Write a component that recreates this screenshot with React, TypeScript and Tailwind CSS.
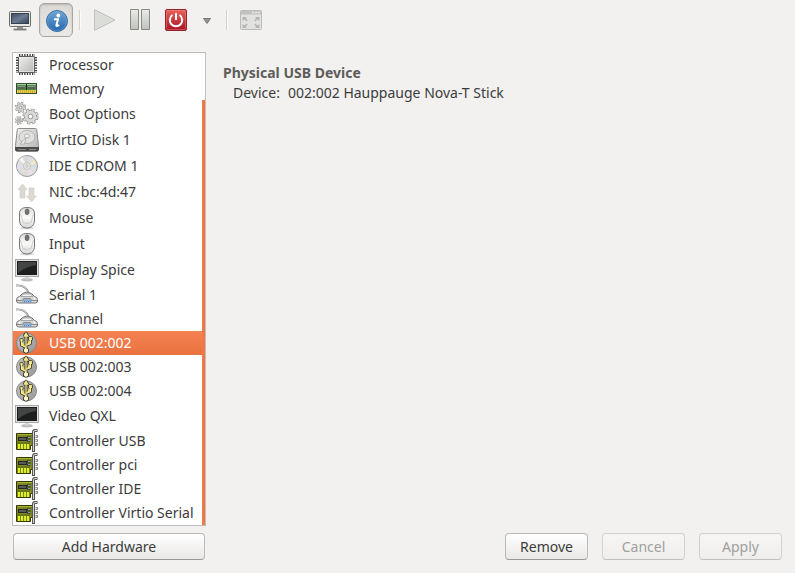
import { useState } from "react";
import type { ReactNode } from "react";

function ProcessorIcon() {
  return (
    <>
      <path d="M4 2.5h16M4 20.5h16" stroke="#3b3b3b" strokeWidth="3" strokeDasharray="1.3 1.3" />
      <path d="M2.5 4v16M20.5 4v16" stroke="#3b3b3b" strokeWidth="3" strokeDasharray="1.3 1.3" />
      <rect x="3.5" y="3.5" width="16" height="16" rx="1" fill="url(#silver)" stroke="#5c5c5a" />
      <rect x="4.500" y="4.500" width="14" height="14" fill="none" stroke="#f4f4f2" strokeOpacity=".6" />
    </>
  );
}

function MemoryIcon() {
  return (
    <>
      <rect x="1.5" y="6.5" width="20" height="10" fill="#4c8b43" stroke="#35502e" />
      <path d="M2 7.500h19" stroke="#a9cfa0" />
      <path d="M3 9h7v3H3zM13 9h7v3h-7z" fill="#59615a" />
      <path d="M3 9.500h7M13 9.500h7" stroke="#8f988f" />
      <rect x="11" y="7" width="1" height="6" fill="#17310f" />
      <path d="M2 14.500h19" stroke="#f0d34a" strokeWidth="3" />
      <path d="M3.500 14.500h18" stroke="#a58a24" strokeWidth="3" strokeDasharray=".6 1.400" />
    </>
  );
}

function Gear({ x, y, r }: { x: number; y: number; r: number }) {
  const tooth = (2 * Math.PI * r) / 16;
  return (
    <g transform={`translate(${x} ${y})`}>
      <circle r={r} fill="none" stroke="#8d8d8b" strokeWidth="3.200" strokeDasharray={`${tooth * 1.2} ${tooth * 0.8}`} />
      <circle r={r - 0.3} fill="#d8d8d6" stroke="#8d8d8b" strokeWidth=".9" />
      <circle r={r} fill="none" stroke="#dcdcda" strokeWidth="2" strokeDasharray={`${tooth * 0.8} ${tooth * 1.2}`} strokeDashoffset={-tooth * 0.2} />
      <circle r={r * 0.35} fill="#fff" stroke="#8d8d8b" strokeWidth=".9" />
    </g>
  );
}

function BootIcon() {
  return (
    <>
      <Gear x={5.5} y={5.5} r={4} />
      <Gear x={4} y={18.5} r={2.600} />
      <Gear x={15.500} y={14.500} r={6.500} />
    </>
  );
}

function DiskIcon() {
  return (
    <>
      <path d="M3.500 .5h17q1 0 1.200 1l1.800 16v4q0 1.500-1.500 1.500H2q-1.500 0-1.500-1.500v-4l1.800-16q.2-1 1.200-1z" fill="url(#silver)" stroke="#8a8a88" />
      <path d="M.5 19.500h23v2q0 1.500-1.500 1.500H2q-1.500 0-1.500-1.500z" fill="#4d4d4b" stroke="#4a4a48" />
      <path d="M3 21.500h8M14 21.500h7" stroke="#8b8b89" />
      <ellipse cx="12" cy="9" rx="8" ry="6.500" fill="#e0e0de" stroke="#b4b4b2" />
      <ellipse cx="12" cy="8" rx="2.500" ry="2" fill="#f1f1ef" stroke="#b4b4b2" />
      <path d="M11 9.500l-6 6.500h4.500z" fill="#eeeeec" stroke="#a9a9a7" strokeWidth=".8" />
    </>
  );
}

function DiscIcon() {
  return (
    <>
      <circle cx="12" cy="12" r="10.500" fill="#dededc" stroke="#9b9b99" />
      <path d="M12 12 4 6l3-3z" fill="#f5f5ee" />
      <path d="M12 12 8 2h5z" fill="#cfd8df" />
      <path d="M12 12 19 6l2 4z" fill="#f5e8bd" />
      <path d="M12 12l9-2v4z" fill="#cbdff0" />
      <path d="M12 12 2 11v4z" fill="#dfe1f2" />
      <path d="M12 12l1 10 5-3z" fill="#eadfe6" />
      <circle cx="12" cy="12" r="3.500" fill="#ececea" stroke="#b7b7b5" strokeWidth=".8" />
      <circle cx="12" cy="12" r="1.300" fill="#fff" stroke="#a2a2a0" strokeWidth=".7" />
    </>
  );
}

function NetworkIcon() {
  return (
    <g fill="#dcd8d2" stroke="#d0ccc5" strokeWidth=".6">
      <path d="M7.500 4 12 9.500H10v8.500H5V9.500H3z" />
      <path d="M14 8h5v8h2.500l-5 5.700-5-5.700H14z" />
    </g>
  );
}

function MouseIcon() {
  return (
    <>
      <ellipse cx="12" cy="22" rx="7" ry="1.500" fill="#000" opacity=".15" />
      <path d="M12 1.500c5 0 7.500 2 7.500 6.500v6c0 5-3 8-7.500 8s-7.500-3-7.500-8V8c0-4.500 2.500-6.500 7.500-6.500z" fill="url(#mouse)" stroke="#737371" />
      <path d="M5 8c2 2 1.500 5 3 8.500M19 8c-2 2-1.500 5-3 8.500M8 16.500q4 2 8 0" fill="none" stroke="#c2c2c0" strokeWidth=".8" />
      <rect x="10.300" y="3" width="3.600" height="5.600" rx="1.800" fill="#71716f" stroke="#5c5c5a" strokeWidth=".8" />
    </>
  );
}

function ScreenIcon() {
  return (
    <>
      <ellipse cx="12" cy="21.800" rx="5.500" ry="1.200" fill="#c9c9c7" stroke="#a3a3a1" strokeWidth=".6" />
      <path d="M10 18h4v3h-4z" fill="#d6d6d4" />
      <rect x=".5" y="1.500" width="23" height="17" fill="#e2e2e0" stroke="#a7a7a5" />
      <rect x="2" y="3" width="20" height="14" fill="#1d1f1f" />
      <path d="M3 4h18v3Q12 8 3 15z" fill="#434545" />
    </>
  );
}

function SerialIcon() {
  return (
    <>
      <path d="M1 2.500q9-1 12.500 7" fill="none" stroke="#8b8b89" strokeWidth="1.800" />
      <path d="M1 2.500q9-1 12.500 7" fill="none" stroke="#e4e4e2" strokeWidth=".7" />
      <path d="M7.500 10.500q4.500-3 9 0l3 3q3 .5 3 3v1.500q0 2-2 2H4q-2.500 0-2.500-2v-1.500q0-2.500 3-3z" fill="#d6d6d4" stroke="#747472" />
      <path d="M8.500 11h7l2.500 2.500H6z" fill="#f7f7f5" stroke="#8a8a88" strokeWidth=".7" />
      <path d="M2 17.500h5.500l1-2h7l1 2H22" fill="none" stroke="#7b7b79" strokeWidth=".8" />
      <path d="M8.300 16.500h7.800l.8 3H7.500z" fill="#5c86bd" />
      <path d="M8.500 17.500h8M8 18.800h9" stroke="#dbe8f5" strokeWidth=".8" strokeDasharray="1 1" />
      <circle cx="4.500" cy="15.500" r="1" fill="#fff" />
      <circle cx="19.500" cy="15.500" r="1" fill="#fff" />
    </>
  );
}

function UsbShape() {
  return (
    <>
      <path d="M11 5v14M11 16.500 6.500 14V9.500M11 14.500l4.500-2V8" />
      <path d="M11 2.300 12.700 5H9.300zM14.700 6.700h1.600v1.600h-1.600zM6 8.500h1v1H6z" />
      <circle cx="11" cy="19.500" r="1.500" />
    </>
  );
}

function UsbIcon() {
  return (
    <>
      <circle cx="11.500" cy="12" r="10" fill="url(#usb)" stroke="#868684" />
      <g fill="none" stroke="#34342c" strokeWidth="3" strokeLinejoin="round"><UsbShape /></g>
      <g fill="#f5e26a" stroke="#f5e68a" strokeWidth="1.300"><UsbShape /></g>
      <circle cx="11" cy="19.500" r="1.900" fill="#fff9cf" />
    </>
  );
}

function CardIcon() {
  return (
    <>
      <path d="M1.500 4.500h17v12h-3v4h-14z" fill="#7f881a" stroke="#343800" />
      <path d="M2.500 5.500h15" stroke="#a5af3a" />
      <rect x="3.500" y="8.500" width="8" height="3" fill="#555a5d" stroke="#25282a" />
      <path d="M12 8.500h3.500M12 11.500h3.500" stroke="#25282a" strokeWidth="2" />
      <path d="M13 8.500h2.500M13 11.500h2.500" stroke="#7aa2d0" />
      <path d="M2 14h13" stroke="#5d6510" />
      <path d="M4 15v5M7 15v5M10 15v5M13 15v5" stroke="#e6fa2c" strokeWidth="1.800" />
      <path d="M18.500 23V3q0-1.500 1.500-1.500h2.500" fill="none" stroke="#555753" strokeWidth="3" />
      <path d="M18.500 22V3q0-1.500 1.500-1.500h2" fill="none" stroke="#d3d7cf" />
      <path d="M20.500 6.500h2v2h-2M20.500 10.500h2v2h-2M20.500 14.500h2v2h-2" fill="#d3d7cf" stroke="#6c6e6a" strokeWidth=".8" />
    </>
  );
}

type Device = { name: string; icon: () => ReactNode; tall?: boolean };

const devices: Device[] = [
  { name: "Processor", icon: ProcessorIcon },
  { name: "Memory", icon: MemoryIcon },
  { name: "Boot Options", icon: BootIcon, tall: true },
  { name: "VirtIO Disk 1", icon: DiskIcon, tall: true },
  { name: "IDE CDROM 1", icon: DiscIcon, tall: true },
  { name: "NIC :bc:4d:47", icon: NetworkIcon, tall: true },
  { name: "Mouse", icon: MouseIcon, tall: true },
  { name: "Input", icon: MouseIcon, tall: true },
  { name: "Display Spice", icon: ScreenIcon, tall: true },
  { name: "Serial 1", icon: SerialIcon },
  { name: "Channel", icon: SerialIcon },
  { name: "USB 002:002", icon: UsbIcon },
  { name: "USB 002:003", icon: UsbIcon },
  { name: "USB 002:004", icon: UsbIcon },
  { name: "Video QXL", icon: ScreenIcon, tall: true },
  { name: "Controller USB", icon: CardIcon },
  { name: "Controller pci", icon: CardIcon },
  { name: "Controller IDE", icon: CardIcon },
  { name: "Controller Virtio Serial", icon: CardIcon },
];

function Gradients() {
  return (
    <svg className="absolute h-0 w-0" aria-hidden="true">
      <defs>
        <linearGradient id="silver" x1="0" y1="0" x2="1" y2="1">
          <stop offset="0" stopColor="#f2f2f0" />
          <stop offset="1" stopColor="#b4b4b2" />
        </linearGradient>
        <linearGradient id="mouse" x1="0" y1="0" x2="0" y2="1">
          <stop offset="0" stopColor="#dcdcda" />
          <stop offset=".5" stopColor="#fafaf8" />
          <stop offset="1" stopColor="#d8d8d6" />
        </linearGradient>
        <linearGradient id="usb" x1="0" y1="0" x2="1" y2="1">
          <stop offset="0" stopColor="#c4c4c2" />
          <stop offset="1" stopColor="#979795" />
        </linearGradient>
        <linearGradient id="info" x1="0" y1="0" x2="0" y2="1">
          <stop offset="0" stopColor="#72a5d6" />
          <stop offset="1" stopColor="#2468ad" />
        </linearGradient>
        <linearGradient id="power" x1="0" y1="0" x2="0" y2="1">
          <stop offset="0" stopColor="#e8645a" />
          <stop offset="1" stopColor="#a81324" />
        </linearGradient>
        <linearGradient id="pale" x1="0" y1="0" x2="0" y2="1">
          <stop offset="0" stopColor="#eaebe8" />
          <stop offset="1" stopColor="#bfc3bb" />
        </linearGradient>
        <linearGradient id="glass" x1="0" y1="0" x2="1" y2="1">
          <stop offset="0" stopColor="#3c4a5c" />
          <stop offset=".5" stopColor="#6c7c91" />
          <stop offset="1" stopColor="#34435a" />
        </linearGradient>
      </defs>
    </svg>
  );
}

function ToolIcon({ children }: { children: ReactNode }) {
  return (
    <svg width="24" height="24" viewBox="0 0 24 24" fill="none" aria-hidden="true">
      {children}
    </svg>
  );
}

function Separator() {
  return <div className="h-5 w-0.5 border-l border-[#d5d2cf] bg-[#fafafa]" />;
}

function Toolbar() {
  return (
    <div role="toolbar" className="flex h-10 items-center pl-2">
      <button aria-label="Console" className="mr-[7px]">
        <ToolIcon>
          <path d="M9 19h6v2H9z" fill="#969894" />
          <path d="M5.500 21.500h13" stroke="#7b7d79" strokeWidth="1.800" />
          <rect x="1.500" y="3.500" width="21" height="15" rx="1" fill="#e8e9e6" stroke="#6c6e6b" />
          <rect x="3.500" y="5.500" width="17" height="10" fill="url(#glass)" stroke="#36404f" />
        </ToolIcon>
      </button>
      <button aria-label="Details" aria-pressed="true" className="mr-1.5 flex h-[34px] w-[34px] items-center justify-center rounded-[5px] border border-[#aaa7a3] bg-linear-to-b from-[#dbd8d5] to-[#ebe9e7] shadow-[inset_0_1px_2px_#bbb8b4]">
        <ToolIcon>
          <circle cx="13" cy="13" r="10.500" fill="url(#info)" stroke="#3a6ea6" />
          <circle cx="13" cy="13" r="9.500" stroke="#81b1df" strokeOpacity=".4" />
          <circle cx="14.300" cy="7.500" r="1.900" fill="#fff" />
          <path d="M10 11.300h4l-1.600 6q-.2 1.500 2.800-.3" stroke="#fff" strokeWidth="2" />
        </ToolIcon>
      </button>
      <Separator />
      <button aria-label="Run" disabled className="ml-3">
        <ToolIcon>
          <path d="M1.500 1.500 22 12 1.500 22.500z" fill="#dbddd8" stroke="#bfc1bc" />
        </ToolIcon>
      </button>
      <button aria-label="Pause" className="ml-3">
        <ToolIcon>
          <path d="M1.500 1.500h8v20h-8zM12.500 1.500h8v20h-8z" fill="url(#pale)" stroke="#868984" />
        </ToolIcon>
      </button>
      <button aria-label="Shut down" className="ml-[11px]">
        <ToolIcon>
          <rect x="1.500" y="1.500" width="21" height="21" rx="1.500" fill="url(#power)" stroke="#99202a" />
          <rect x="2.500" y="2.500" width="19" height="19" rx="1" stroke="#f39b91" strokeOpacity=".4" />
          <path d="M8.500 7a6.200 6.200 0 1 0 7 0M12 5v7" stroke="#fff" strokeWidth="2" />
        </ToolIcon>
      </button>
      <button aria-label="Shut down options" className="mx-3.5 flex w-2.5 justify-center pt-0.5">
        <svg width="10" height="8" viewBox="0 0 10 8" aria-hidden="true">
          <path d="M1.500 1.500h7L5 6.500z" fill="#969491" stroke="#7a7875" />
        </svg>
      </button>
      <Separator />
      <button aria-label="Fullscreen" disabled className="ml-[11px]">
        <ToolIcon>
          <rect x="1.500" y="2.500" width="21" height="19" rx="1" fill="#e2e2e0" stroke="#bbbbb9" />
          <path d="M2 3h20v3.500H2z" fill="#c2c2c0" />
          <path d="M13 4.500h2M16 4.500h2M19 4.500h2" stroke="#e9e9e7" strokeWidth="1.500" />
          <path d="M3.500 9h4.500l-1.300 1.300 2 2-1.200 1.200-2-2L3.500 13zM20.500 9H16l1.300 1.300-2 2 1.200 1.200 2-2 2 1.500zM3.500 20h4.500l-1.300-1.300 2-2-1.200-1.200-2 2-2-1.500zM20.500 20H16l1.300-1.300-2-2 1.200-1.200 2 2 2-1.500z" fill="#b5b5b3" />
        </ToolIcon>
      </button>
    </div>
  );
}

const buttonBase = "h-[27px] rounded-[4px] border text-sm bg-linear-to-b";
const buttonOn = "border-[#bcb9b6] border-b-[#9c9997] from-white to-[#e9e8e6] text-[#3c3c3c]";
const buttonOff = "border-[#d3d0ce] border-b-[#c2bfbd] from-[#f7f6f5] to-[#efeeed] text-[#a09f9d]";

export default function App() {
  const [selected, setSelected] = useState("USB 002:002");
  return (
    <div className="flex min-h-screen flex-col bg-[#f2f1f0] font-['Noto_Sans','Open_Sans',sans-serif] text-sm text-[#3c3c3c]">
      <Gradients />
      <Toolbar />
      <div className="flex flex-1 gap-[17px] px-3 pt-3 pb-[13px]">
        <aside className="flex w-[194px] shrink-0 flex-col gap-[7px]">
          <div className="relative flex-1 border border-[#bfbebc] bg-white">
            <ul role="listbox" aria-label="Hardware">
              {devices.map(({ name, icon: Icon, tall }) => (
                <li
                  key={name}
                  role="option"
                  tabIndex={0}
                  aria-selected={name === selected}
                  onClick={() => setSelected(name)}
                  className={`flex items-center gap-2.5 pl-0.5 whitespace-nowrap ${tall ? "h-[26px]" : "h-6"} ${
                    name === selected ? "bg-linear-to-b from-[#f58253] to-[#e9713f] text-white" : ""
                  }`}
                >
                  <svg className="shrink-0" width="24" height="24" viewBox="0 0 24 24" aria-hidden="true">
                    <Icon />
                  </svg>
                  {name}
                </li>
              ))}
            </ul>
            <div className="absolute top-[47px] right-0 bottom-0 w-[3px] bg-[#f07746]" />
          </div>
          <button className={`${buttonBase} ${buttonOn} mx-px`}>Add Hardware</button>
        </aside>
        <main className="flex flex-1 flex-col justify-between">
          <section className="pt-[11px] leading-5">
            <h1 className="font-bold text-[#5e5d5a]">Physical USB Device</h1>
            <dl className="flex gap-2 pl-2.5">
              <dt>Device:</dt>
              <dd>002:002 Hauppauge Nova-T Stick</dd>
            </dl>
          </section>
          <div className="flex justify-end gap-3.5 pr-px">
            <button className={`${buttonBase} ${buttonOn} w-[83px]`}>Remove</button>
            <button disabled className={`${buttonBase} ${buttonOff} w-[83px]`}>Cancel</button>
            <button disabled className={`${buttonBase} ${buttonOff} w-[83px]`}>Apply</button>
          </div>
        </main>
      </div>
    </div>
  );
}
